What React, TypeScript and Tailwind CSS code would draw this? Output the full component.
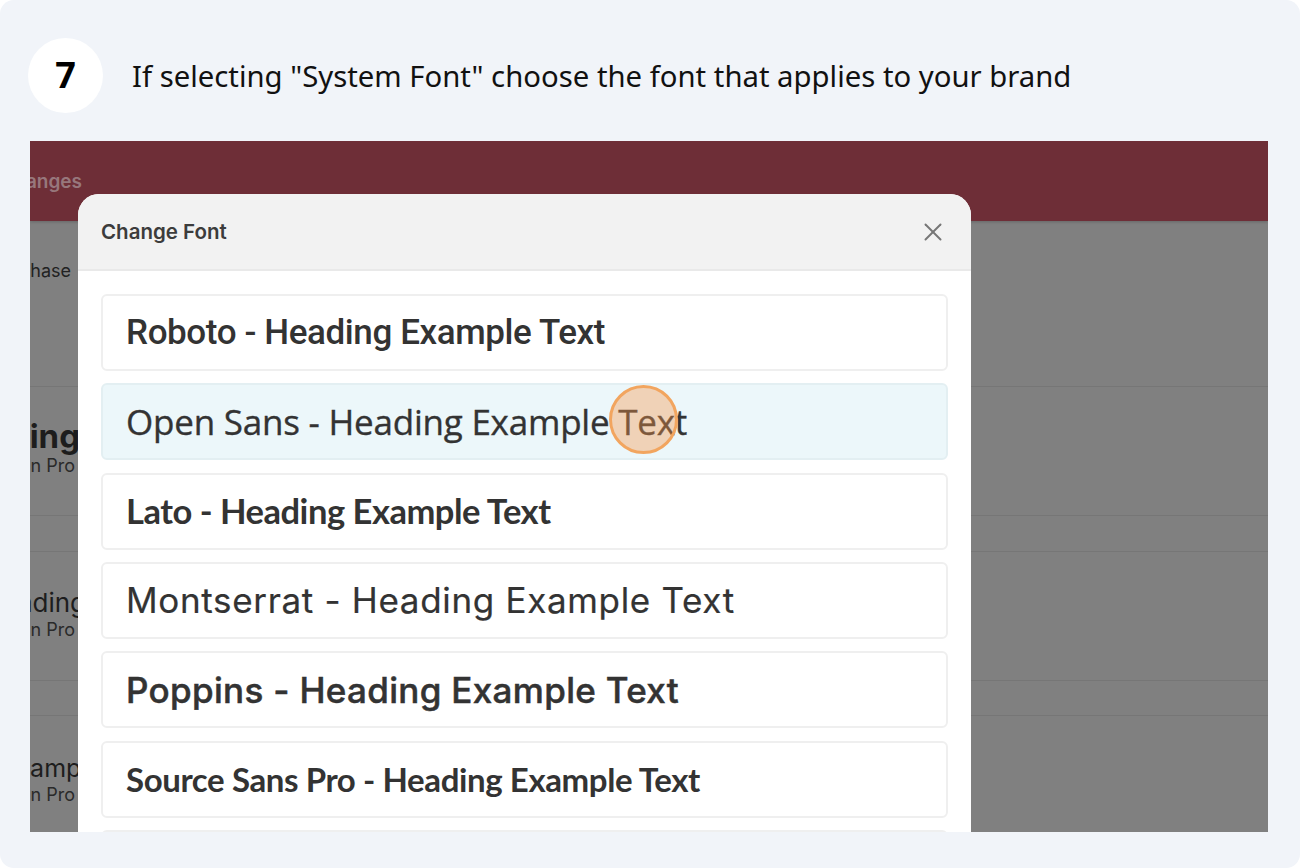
import { X } from "lucide-react"

const fonts = [
  { label: "Roboto - Heading Example Text", cls: "font-['Roboto',sans-serif] font-medium text-[35px] tracking-[-0.4px] pt-[2px]" },
  { label: "Open Sans - Heading Example Text", cls: "font-['Open_Sans',sans-serif] font-medium text-[35px] tracking-[-0.22px] [-webkit-text-stroke:0.35px_#333]", active: true },
  { label: "Lato - Heading Example Text", cls: "font-['Lato',sans-serif] font-bold text-[34.5px] tracking-[-0.48px]" },
  { label: "Montserrat - Heading Example Text", cls: "font-['Inter',sans-serif] font-normal text-[35px] tracking-[0.67px] [-webkit-text-stroke:0.2px_#333]" },
  { label: "Poppins - Heading Example Text", cls: "font-['Inter',sans-serif] font-medium text-[35px] tracking-[0.32px] [-webkit-text-stroke:0.5px_#333]" },
  { label: "Source Sans Pro - Heading Example Text", cls: "font-['Lato',sans-serif] font-bold text-[33px] tracking-[-0.4px] pt-[1px]" },
]

function BackRow({ title, titleCls, w, h, mt }: { title: string; titleCls: string; w: string; h: string; mt: string }) {
  return (
    <div className={`${h} border-t border-[#767676]`}>
      <div className={`${mt} ${w} flex justify-end whitespace-nowrap text-[#1d1d1d]`}>
        <span className={titleCls}>{title}</span>
      </div>
      <div className="w-[45px] flex justify-end whitespace-nowrap font-['Inter',sans-serif] text-[18px] leading-[20px] text-[#2a2a2a]">
        Plan Pro
      </div>
    </div>
  )
}

export default function App() {
  return (
    <div className="w-[1300px] h-[868px] bg-white overflow-hidden">
      <div className="h-full bg-[#f1f4f9] rounded-[14px] pt-[38px] pl-[30px] pr-[32px]">
        <div className="flex items-center h-[74px]">
          <div className="w-[75px] h-[75px] -ml-[2px] rounded-full bg-white flex items-center justify-center font-['Noto_Sans',sans-serif] font-bold text-[36px] text-black">
            7
          </div>
          <p className="ml-[29px] pt-[3px] font-['Noto_Sans',sans-serif] text-[29.3px] text-[#111] whitespace-nowrap">
            If selecting "System Font" choose the font that applies to your brand
          </p>
        </div>

        <div className="relative mt-[29px] h-[691px] bg-[#808080] overflow-hidden">
          <div className="h-[80px] bg-[#6e2e37] shadow-[0_1px_3px_rgba(0,0,0,0.2)] flex items-center">
            <div className="w-[52px] flex justify-end whitespace-nowrap font-['Inter',sans-serif] font-semibold text-[19px] text-[#97777c] pt-[2px]">
              Save Changes
            </div>
          </div>
          <div className="h-[165px] pt-[36px]">
            <div className="w-[41px] flex justify-end whitespace-nowrap font-['Inter',sans-serif] text-[18px] text-[#222]">
              Purchase
            </div>
          </div>
          <BackRow title="Heading" titleCls="font-['Inter',sans-serif] font-bold text-[33px] leading-[39px]" w="w-[50px]" h="h-[129px]" mt="mt-[30px]" />
          <div className="h-[36px] border-t border-[#767676]" />
          <BackRow title="Heading" titleCls="font-['Inter',sans-serif] text-[26px] leading-[35px]" w="w-[56px]" h="h-[129px]" mt="mt-[33px]" />
          <div className="h-[35px] border-t border-[#767676]" />
          <BackRow title="Example" titleCls="font-['Inter',sans-serif] text-[25px] leading-[34px]" w="w-[72px]" h="h-[117px]" mt="mt-[35px]" />

          <div className="absolute left-[48px] top-[53px] w-[893px] h-[660px] bg-white rounded-t-[21px] overflow-hidden">
            <div className="h-[77px] bg-[#f2f2f2] border-b-2 border-[#e9e9e9] flex items-center justify-between pl-[23px] pr-[23px]">
              <span className="font-['Inter',sans-serif] font-semibold text-[20.5px] text-[#3c3c3c] pt-[2px]">Change Font</span>
              <X className="w-[30px] h-[30px] text-[#777]" strokeWidth={1.6} />
            </div>
            <div className="flex flex-col gap-[12.33px] pt-[23px] px-[23px]">
              {fonts.map((f) => (
                <div
                  key={f.label}
                  className={`h-[77px] shrink-0 rounded-[6px] border-2 flex items-center pl-[23px] whitespace-nowrap text-[#333] ${
                    f.active ? "bg-[#ecf7fa] border-[#e3eff2]" : "bg-white border-[#efefef]"
                  } ${f.cls}`}
                >
                  {f.label}
                </div>
              ))}
              <div className="h-[77px] shrink-0 rounded-[6px] border-2 border-[#efefef] bg-white" />
            </div>
          </div>

          <div className="absolute left-[579px] top-[244px] w-[69px] h-[69px] rounded-full border-[3px] border-[#f2a55f] bg-[#f7964a]/38" />
        </div>
      </div>
    </div>
  )
}
